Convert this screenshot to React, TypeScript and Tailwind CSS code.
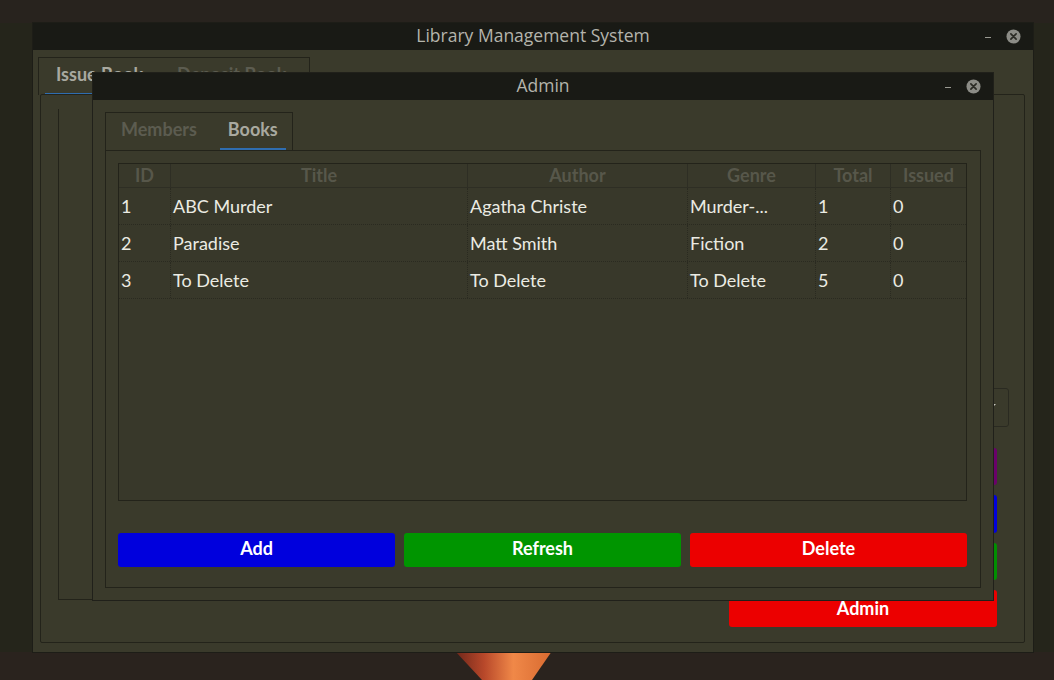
import { useState } from "react";

type Book = { id: number; title: string; author: string; genre: string; total: number; issued: number };

const books: Book[] = [
  { id: 1, title: "ABC Murder", author: "Agatha Christe", genre: "Murder-...", total: 1, issued: 0 },
  { id: 2, title: "Paradise", author: "Matt Smith", genre: "Fiction", total: 2, issued: 0 },
  { id: 3, title: "To Delete", author: "To Delete", genre: "To Delete", total: 5, issued: 0 },
];

const columns = [
  { key: "id", label: "ID", width: "w-[52px]" },
  { key: "title", label: "Title", width: "w-[297px]" },
  { key: "author", label: "Author", width: "w-[220px]" },
  { key: "genre", label: "Genre", width: "w-[128px]" },
  { key: "total", label: "Total", width: "w-[75px]" },
  { key: "issued", label: "Issued", width: "flex-1" },
] as const;

function CloseIcon() {
  return (
    <svg width="15" height="15" viewBox="0 0 16 16">
      <circle cx="8" cy="8" r="7.5" fill="#8c8c86" />
      <path d="M5.2 5.2 L10.8 10.8 M10.8 5.2 L5.2 10.8" stroke="#2a2a24" strokeWidth="1.8" strokeLinecap="round" />
    </svg>
  );
}

function TitleBar({ title }: { title: string }) {
  return (
    <div className="grid h-[27px] shrink-0 grid-cols-[1fr_auto_1fr] items-center bg-[#191a15] px-3 font-['Open_Sans',sans-serif] text-[17.5px] text-[#b4b4ac]">
      <span />
      <span className="-mt-[2px] leading-none">{title}</span>
      <div className="flex items-center justify-end gap-[15px]">
        <span className="mt-[2px] h-[1px] w-[6px] bg-[#9a9a92]" />
        <CloseIcon />
      </div>
    </div>
  );
}

function Tabs({ tabs, active, wide }: { tabs: string[]; active: number; wide?: boolean }) {
  return (
    <div
      className={`flex h-[38px] w-fit items-stretch border border-b-0 border-[#23231a] font-['Lato',sans-serif] text-[18px] font-bold ${
        wide ? "pl-[6px] pr-[12px]" : "pl-[7px] pr-[6px]"
      }`}
    >
      {tabs.map((t, i) => (
        <div
          key={t}
          className={`flex items-center border-b-2 pb-[2px] ${wide ? "px-[11px]" : "px-[8px]"} ${
            i === active ? "border-[#2f6db0] text-[#a9a9a0]" : "border-transparent text-[#5c5c50]"
          } ${i > 0 ? (wide ? "ml-[12px]" : "ml-[15px]") : ""}`}
        >
          {t}
        </div>
      ))}
    </div>
  );
}

function BooksTable() {
  return (
    <div className="flex h-[338px] flex-col border border-[#23231a] bg-[#38382a] font-['Lato',sans-serif] text-[18px]">
      <div className="flex h-[24px] shrink-0 border-b border-[#2e2e24] font-bold text-[#57574a]">
        {columns.map((c, i) => (
          <div
            key={c.key}
            className={`${c.width} flex items-center justify-center ${i < columns.length - 1 ? "border-r border-[#2e2e24]" : ""}`}
          >
            {c.label}
          </div>
        ))}
      </div>
      {books.map((b) => (
        <div key={b.id} className="flex h-[37px] shrink-0 border-b border-dotted border-[#2a2a20] text-[#ebebe3]">
          {columns.map((c, i) => (
            <div
              key={c.key}
              className={`${c.width} flex items-center pl-[2px] ${i < columns.length - 1 ? "border-r border-dotted border-[#2a2a20]" : ""}`}
            >
              {String(b[c.key])}
            </div>
          ))}
        </div>
      ))}
    </div>
  );
}

function AdminDialog() {
  const [tab] = useState(1);
  return (
    <div className="absolute left-[93px] top-[73px] flex h-[527px] w-[900px] flex-col bg-[#3a3a2b] shadow-[0_0_0_1px_#20201a]">
      <TitleBar title="Admin" />
      <div className="flex flex-1 flex-col px-[12px] pb-[12px] pt-[12px]">
        <Tabs tabs={["Members", "Books"]} active={tab} />
        <div className="flex flex-1 flex-col border border-[#23231a] pl-[12px] pr-[13px] pt-[12px]">
          <BooksTable />
          <div className="mt-[32px] flex gap-[9px] font-['Lato',sans-serif] text-[18px] font-bold text-white">
            <button className="h-[34px] flex-1 rounded-[3px] bg-[#0000dd] pb-[3px]">Add</button>
            <button className="h-[34px] flex-1 rounded-[3px] bg-[#009500] pb-[3px]">Refresh</button>
            <button className="h-[34px] flex-1 rounded-[3px] bg-[#ec0000] pb-[3px]">Delete</button>
          </div>
        </div>
      </div>
    </div>
  );
}

function MainWindow() {
  return (
    <div className="absolute left-[33px] top-[23px] flex h-[629px] w-[1000px] flex-col bg-[#3a3a2b] shadow-[0_0_0_1px_#1d1d17]">
      <TitleBar title="Library Management System" />
      <div className="flex flex-1 flex-col pb-[9px] pl-[5px] pr-[8px] pt-[7px]">
        <Tabs tabs={["Issue Book", "Deposit Book"]} active={0} wide />
        <div className="-mt-px ml-[2px] flex flex-1 rounded-[2px] border border-[#23231a] pb-[15px] pl-[17px] pt-[14px]">
          <div className="mb-[27px] w-[645px] border-b border-l border-[#23231a]" />
          <div className="ml-[26px] flex w-[280px] flex-col justify-end font-['Lato',sans-serif] text-[18px] font-bold text-white">
            <div className="flex h-[39px] items-center justify-end rounded-[3px] border border-[#2a2a21] pr-[12px]">
              <svg width="7" height="7" viewBox="0 0 7 7">
                <path d="M0 0 H7 L0 7 Z" fill="#c8c8c0" />
              </svg>
            </div>
            <div className="mt-[21px] h-[37px] w-[268px] rounded-[3px] bg-[#6a006a]" />
            <div className="mt-[10px] h-[38px] w-[268px] rounded-[3px] bg-[#0000dd]" />
            <div className="mt-[10px] h-[37px] w-[268px] rounded-[3px] bg-[#008f00]" />
            <button className="mt-[10px] h-[37px] w-[268px] rounded-[3px] bg-[#ec0000]">Admin</button>
          </div>
        </div>
      </div>
    </div>
  );
}

export default function App() {
  return (
    <div className="relative h-[680px] w-[1054px] overflow-hidden bg-[#25251b]">
      <div className="h-[23px] bg-[#28231e]" />
      <div className="absolute left-0 top-[652px] h-[28px] w-full bg-[#2a231e]" />
      <svg className="absolute left-[440px] top-[650px]" width="130" height="30" viewBox="0 0 130 30">
        <defs>
          <linearGradient id="flame" x1="0" y1="0" x2="1" y2="0">
            <stop offset="0" stopColor="#6e261a" />
            <stop offset="0.3" stopColor="#b8482a" />
            <stop offset="0.6" stopColor="#f08848" />
            <stop offset="1" stopColor="#d86a30" />
          </linearGradient>
        </defs>
        <polygon points="15,1 112,1 92,30 42,30" fill="url(#flame)" />
      </svg>
      <MainWindow />
      <AdminDialog />
    </div>
  );
}
